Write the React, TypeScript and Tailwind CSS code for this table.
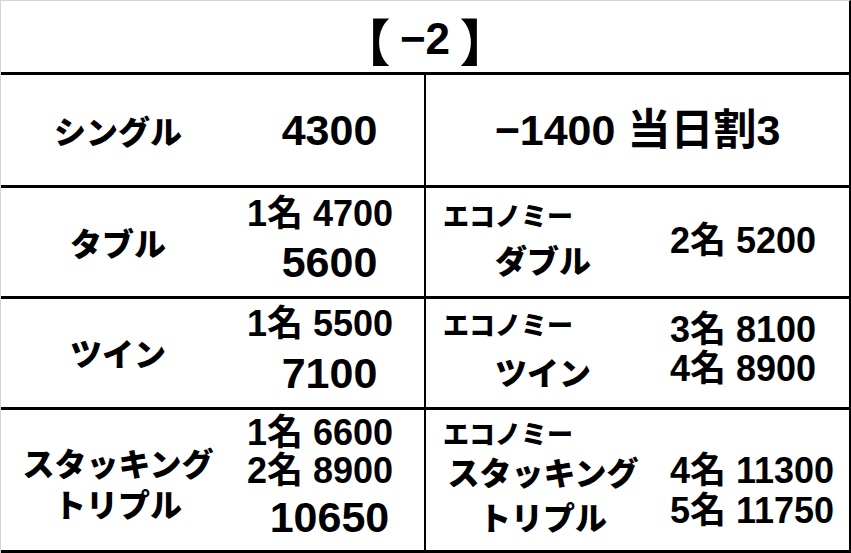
import React from "react";

const NUM = "font-['Liberation_Sans','Noto_Sans_CJK_JP',sans-serif] font-bold text-black";
const KANA = "font-['Noto_Sans_CJK_JP',sans-serif] font-black text-black";

export default function App() {
  return (
    <div className="w-[851px] h-[553px] bg-white overflow-hidden">
      <div className="flex flex-col w-[851px] h-[553px] border-t border-l border-t-[#d4d4d4] border-l-[#d4d4d4] border-r-2 border-r-black">
        {/* Title */}
        <div className="h-[74px] shrink-0 flex items-center justify-center border-b-[3px] border-black">
          <div className="flex items-center leading-none pt-[4px]">
            <span className={`${KANA} text-[50px] [font-feature-settings:'palt']`}>【</span>
            <span className={`${NUM} text-[44px] px-[11px]`}>−2</span>
            <span className={`${KANA} text-[50px] [font-feature-settings:'palt']`}>】</span>
          </div>
        </div>

        {/* Row 1: シングル */}
        <div className="h-[113px] shrink-0 flex border-b-[3px] border-black">
          <div className="w-[425px] shrink-0 flex border-r-2 border-black">
            <div className={`w-[234px] flex items-center justify-center ${KANA} text-[32px] leading-none`}>シングル</div>
            <div className={`flex-1 flex items-center justify-center ${NUM} text-[43px] leading-none`}>4300</div>
          </div>
          <div className={`flex-1 flex items-center justify-center ${NUM} text-[43px] leading-none`}>
            −1400 当日割3
          </div>
        </div>

        {/* Row 2: ダブル */}
        <div className="h-[111px] shrink-0 flex border-b-[3px] border-black">
          <div className="w-[425px] shrink-0 flex border-r-2 border-black">
            <div className={`w-[234px] flex items-center justify-center ${KANA} text-[32px] leading-none`}>タブル</div>
            <div className="flex-1 flex flex-col pt-[6px]">
              <div className={`${NUM} text-[36px] leading-[40px] pl-[12px] whitespace-nowrap`}>1名 4700</div>
              <div className={`${NUM} text-[43px] leading-[56px] text-center`}>5600</div>
            </div>
          </div>
          <div className="flex-1 flex">
            <div className="w-[234px] flex flex-col pt-[12px]">
              <div className={`${KANA} text-[26px] leading-[30px] pl-[17px] whitespace-nowrap`}>エコノミー</div>
              <div className={`${KANA} text-[32px] leading-[58px] text-center`}>ダブル</div>
            </div>
            <div className="flex-1 flex flex-col justify-center pl-[10px] pb-[3px]">
              <div className={`${NUM} text-[36px] leading-[40px] whitespace-nowrap`}>2名 5200</div>
            </div>
          </div>
        </div>

        {/* Row 3: ツイン */}
        <div className="h-[111px] shrink-0 flex border-b-[3px] border-black">
          <div className="w-[425px] shrink-0 flex border-r-2 border-black">
            <div className={`w-[234px] flex items-center justify-center pb-[3px] ${KANA} text-[32px] leading-none`}>ツイン</div>
            <div className="flex-1 flex flex-col pt-[5px]">
              <div className={`${NUM} text-[36px] leading-[40px] pl-[12px] whitespace-nowrap`}>1名 5500</div>
              <div className={`${NUM} text-[43px] leading-[58px] text-center`}>7100</div>
            </div>
          </div>
          <div className="flex-1 flex">
            <div className="w-[234px] flex flex-col pt-[10px]">
              <div className={`${KANA} text-[26px] leading-[30px] pl-[17px] whitespace-nowrap`}>エコノミー</div>
              <div className={`${KANA} text-[32px] leading-[64px] text-center`}>ツイン</div>
            </div>
            <div className="flex-1 flex flex-col pt-[11px] pl-[10px]">
              <div className={`${NUM} text-[36px] leading-[39px] whitespace-nowrap`}>3名 8100</div>
              <div className={`${NUM} text-[36px] leading-[39px] whitespace-nowrap`}>4名 8900</div>
            </div>
          </div>
        </div>

        {/* Row 4: スタッキングトリプル */}
        <div className="flex-1 flex border-b-[3px] border-black">
          <div className="w-[425px] shrink-0 flex border-r-2 border-black">
            <div className="w-[234px] flex flex-col items-center pt-[32px]">
              <div className={`${KANA} text-[32px] leading-[41px] whitespace-nowrap`}>スタッキング</div>
              <div className={`${KANA} text-[32px] leading-[41px] whitespace-nowrap`}>トリプル</div>
            </div>
            <div className="flex-1 flex flex-col pt-[4px]">
              <div className={`${NUM} text-[36px] leading-[38px] pl-[12px] whitespace-nowrap`}>1名 6600</div>
              <div className={`${NUM} text-[36px] leading-[38px] pl-[12px] whitespace-nowrap`}>2名 8900</div>
              <div className={`${NUM} text-[43px] leading-[54px] text-center`}>10650</div>
            </div>
          </div>
          <div className="flex-1 flex">
            <div className="w-[234px] flex flex-col pt-[8px]">
              <div className={`${KANA} text-[26px] leading-[30px] pl-[17px] whitespace-nowrap`}>エコノミー</div>
              <div className={`${KANA} text-[32px] leading-[46px] text-center whitespace-nowrap`}>スタッキング</div>
              <div className={`${KANA} text-[32px] leading-[44px] text-center whitespace-nowrap`}>トリプル</div>
            </div>
            <div className="flex-1 flex flex-col pt-[41px] pl-[10px]">
              <div className={`${NUM} text-[36px] leading-[40px] whitespace-nowrap`}>4名 11300</div>
              <div className={`${NUM} text-[36px] leading-[40px] whitespace-nowrap`}>5名 11750</div>
            </div>
          </div>
        </div>
      </div>
    </div>
  );
}
